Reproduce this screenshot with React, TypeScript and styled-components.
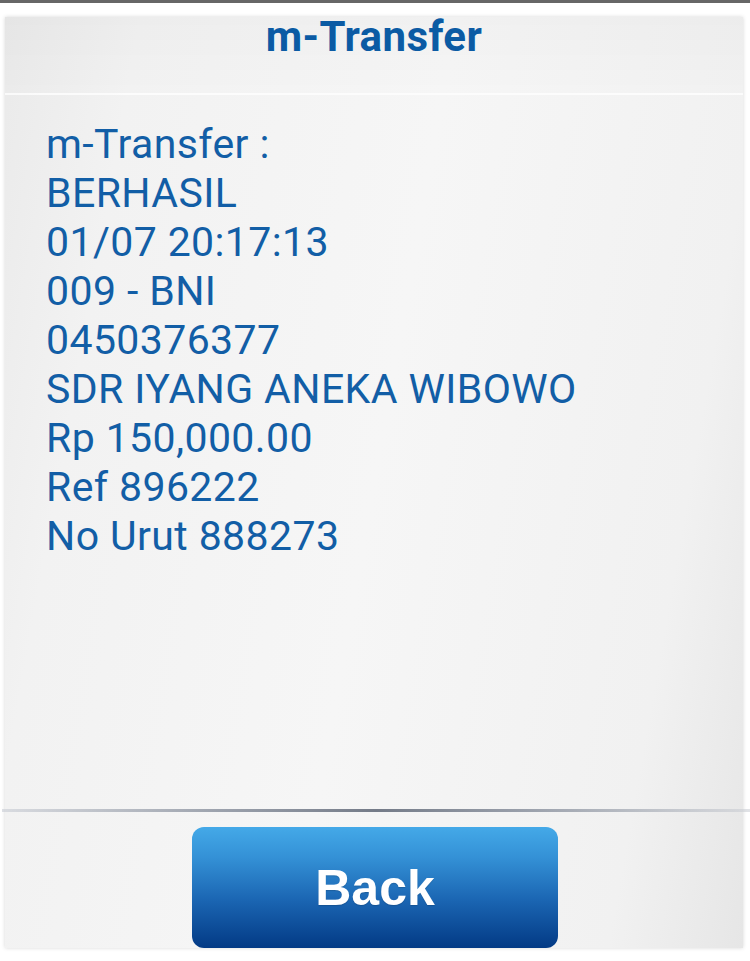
import React from "react";
import styled, { createGlobalStyle } from "styled-components";

const GlobalStyle = createGlobalStyle`
  html, body { margin: 0; padding: 0; background: #ffffff; }
  * { box-sizing: border-box; }
`;

const Screen = styled.div`
  width: 750px;
  height: 961px;
  display: flex;
  flex-direction: column;
  background: #ffffff;
  overflow: hidden;
`;

const StatusStrip = styled.div`
  height: 3px;
  flex: none;
  background: #676767;
`;

const Frame = styled.div`
  flex: 1;
  padding: 14px 7px 13px 5px;
  display: flex;
`;

const Panel = styled.div`
  flex: 1;
  display: flex;
  flex-direction: column;
  background: linear-gradient(100deg, #eaeaea 0%, #f2f2f2 15%, #f6f6f6 50%, #f1f1f1 85%, #e6e6e6 100%);
  box-shadow: 0 0 4px rgba(0, 0, 0, 0.16);
`;

const Header = styled.div`
  height: 78px;
  flex: none;
  display: flex;
  justify-content: center;
  align-items: flex-start;
  border-bottom: 2px solid rgba(255, 255, 255, 0.8);
  background: linear-gradient(180deg, rgba(0,0,0,0.02) 0%, rgba(0,0,0,0) 100%);
`;

const Title = styled.h1`
  margin: 0;
  font-family: "Roboto", "Liberation Sans", sans-serif;
  font-weight: 700;
  font-size: 42px;
  line-height: 40px;
  color: #0b5ba4;
  letter-spacing: 0.4px;
`;

const Body = styled.div`
  flex: 1;
  padding: 25px 0 0 41px;
`;

const Line = styled.div`
  font-family: "Roboto", "Liberation Sans", sans-serif;
  font-size: 41px;
  line-height: 49px;
  letter-spacing: 0.4px;
  color: #125ea6;
  white-space: nowrap;
`;

const Divider = styled.div`
  height: 3px;
  flex: none;
  margin-left: -3px;
  margin-right: -7px;
  background: linear-gradient(90deg, rgba(200,204,212,0.6) 0%, #9aa0ab 30%, #747b88 50%, #9aa0ab 70%, rgba(205,208,214,0.6) 100%);
`;

const Footer = styled.div`
  height: 136px;
  flex: none;
  display: flex;
  justify-content: center;
  align-items: flex-end;
  padding-left: 2px;
`;

const BackButton = styled.button`
  width: 366px;
  height: 121px;
  border: none;
  border-radius: 12px;
  background: linear-gradient(180deg, #44a9e8 0%, #3491d6 25%, #1b66b3 60%, #033a85 100%);
  color: #ffffff;
  font-family: "Liberation Sans", Arial, sans-serif;
  font-weight: 700;
  font-size: 50px;
  padding: 0;
  text-shadow: 0 1px 1px rgba(0, 0, 0, 0.15);
  cursor: pointer;
`;

const lines = [
  "m-Transfer :",
  "BERHASIL",
  "01/07 20:17:13",
  "009 - BNI",
  "0450376377",
  "SDR IYANG ANEKA WIBOWO",
  "Rp 150,000.00",
  "Ref 896222",
  "No Urut 888273",
];

export default function App() {
  return (
    <>
      <GlobalStyle />
      <Screen>
        <StatusStrip />
        <Frame>
          <Panel>
            <Header>
              <Title>m-Transfer</Title>
            </Header>
            <Body>
              {lines.map((l) => (
                <Line key={l}>{l}</Line>
              ))}
            </Body>
            <Divider />
            <Footer>
              <BackButton>Back</BackButton>
            </Footer>
          </Panel>
        </Frame>
      </Screen>
    </>
  );
}
